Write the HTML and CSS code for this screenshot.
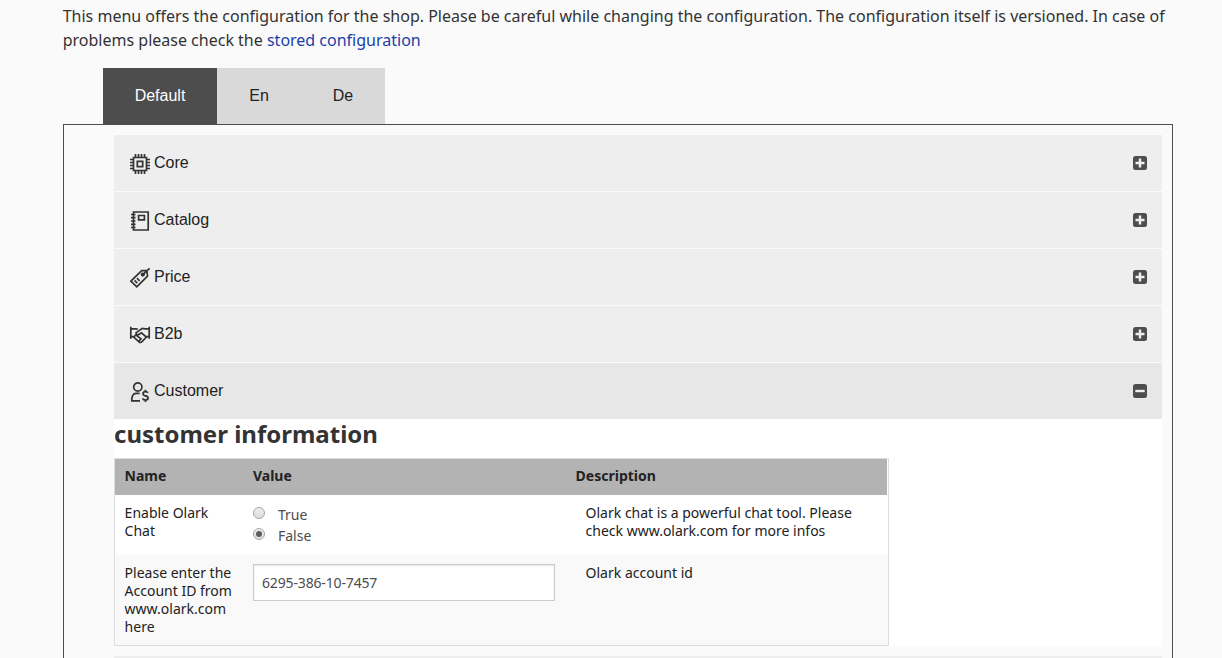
FILE: index.html
```html
<!DOCTYPE html>
<html lang="en">
<head>
<meta charset="utf-8">
<title>Configuration</title>
<link rel="stylesheet" href="styles.css">
</head>
<body>
<main class="page">
  <p class="intro"><span class="line">This menu offers the configuration for the shop. Please be careful while changing the configuration. The configuration itself is versioned. In case of</span> <span class="line">problems please check the <a class="link" href="#">stored configuration</a></span></p>
  <nav class="tabs">
    <a class="tab tab-active">Default</a>
    <a class="tab">En</a>
    <a class="tab">De</a>
  </nav>
  <section class="panel">
    <div class="item">
      <svg class="icon" viewBox="0 0 20 20"><path d="M3.5 3.5h13v13h-13zM7.3 7.3h5.4v5.4H7.3zM5.5 0v3.5M8.5 0v3.5M11.5 0v3.5M14.5 0v3.5M5.5 16.5V20M8.5 16.5V20M11.5 16.5V20M14.5 16.5V20M0 5.5h3.5M0 8.5h3.5M0 11.5h3.5M0 14.5h3.5M16.5 5.5H20M16.5 8.5H20M16.5 11.5H20M16.5 14.5H20"/></svg>
      <span class="label">Core</span>
      <svg class="toggle" viewBox="0 0 14 14"><rect width="14" height="14" rx="2.5"/><path d="M7 2.5v9M2.5 7h9"/></svg>
    </div>
    <div class="item">
      <svg class="icon" viewBox="0 0 20 20"><path d="M3.5 1h14.7v18H3.5zM8.6 4.5h5.8v4.4H8.6zM1 3.5h4.5M1 6.7h4.5M1 10h4.5M1 13.3h4.5M1 16.5h4.5"/></svg>
      <span class="label">Catalog</span>
      <svg class="toggle" viewBox="0 0 14 14"><rect width="14" height="14" rx="2.5"/><path d="M7 2.5v9M2.5 7h9"/></svg>
    </div>
    <div class="item">
      <svg class="icon" viewBox="0 0 20 20"><path d="M.9 13.2 11.7 2.6l5.2-.2.6 5.8L6.8 18.9zM19.6.4l-7 6.4M4.6 12.3l2.6 2.8M7 10.2l2.6 2.8"/><circle class="solid" cx="12.8" cy="6.6" r="1.3"/></svg>
      <span class="label">Price</span>
      <svg class="toggle" viewBox="0 0 14 14"><rect width="14" height="14" rx="2.5"/><path d="M7 2.5v9M2.5 7h9"/></svg>
    </div>
    <div class="item">
      <svg class="icon" viewBox="0 0 20 20"><path d="M.8 1.8v12M19.2 1.8v12M.8 3.8h4l3 .4M.8 11.7h3M16.4 11.7h2.8M19.2 3.8h-4l-3-.4L6 7.8c.2 2 1.8 2.4 3.2 1.4l2.2-1.4 5 4.2-4.8 5-1.8.6-6-5.4 2-2.4 5.2 4-2.2 2.4"/></svg>
      <span class="label">B2b</span>
      <svg class="toggle" viewBox="0 0 14 14"><rect width="14" height="14" rx="2.5"/><path d="M7 2.5v9M2.5 7h9"/></svg>
    </div>
    <div class="item item-open">
      <svg class="icon" viewBox="0 0 20 20"><circle cx="7.8" cy="5" r="4.1"/><path d="M10 18.9H1.8c-.2-4.8 1.4-7.6 4.2-7.6h3.6M18 10.8c-.5-.8-1.3-1.2-2.5-1.2-3.3 0-3.2 3.8-.1 4.2 3.8.5 3.3 4.2.1 4.2-1.4 0-2.4-.5-3-1.5M15.4 7.7v1.9M15.4 18v2"/></svg>
      <span class="label">Customer</span>
      <svg class="toggle" viewBox="0 0 14 14"><rect width="14" height="14" rx="2.5"/><path d="M2.3 7h9.4"/></svg>
    </div>
    <div class="content">
      <h2 class="title">customer information</h2>
      <div class="table">
        <div class="row head"><div>Name</div><div>Value</div><div>Description</div></div>
        <div class="row">
          <div>Enable Olark<br>Chat</div>
          <div class="choices">
            <label class="choice"><i class="radio"></i>True</label>
            <label class="choice"><i class="radio radio-on"></i>False</label>
          </div>
          <div class="desc">Olark chat is a powerful chat tool. Please<br>check www.olark.com for more infos</div>
        </div>
        <div class="row row-alt">
          <div>Please enter the<br>Account ID from<br>www.olark.com<br>here</div>
          <div><input class="field" type="text" value="6295-386-10-7457"></div>
          <div class="desc">Olark account id</div>
        </div>
      </div>
    </div>
    <div class="item item-next"></div>
  </section>
</main>
</body>
</html>
```
FILE: styles.css
```css
* { box-sizing: border-box; }
body {
  margin: 0;
  background: #fafafa;
  color: #222;
  font-family: "Noto Sans", sans-serif;
}
.page { width: 1110px; margin-left: 63px; padding-top: 4px; }
.intro { margin: 0 0 0 -.3px; font-size: 16px; line-height: 24px; color: #333; white-space: nowrap; }
.line { display: block; }
.link { color: #1a3fa8; text-decoration: none; }
.tabs {
  display: flex;
  width: 282px;
  height: 56px;
  margin: 16px 0 0 40px;
  background: #d9d9d9;
  font: 16px/56px "Liberation Sans", Arial, sans-serif;
}
.tab { width: 84px; text-align: center; }
.tab-active { width: 114px; background: #4d4d4d; color: #fff; }
.panel { height: 534px; padding: 10px 10px 0 50px; border: 1px solid #4d4d4d; border-bottom: 0; }
.item {
  display: flex;
  align-items: center;
  height: 56px;
  margin-bottom: 1px;
  padding: 0 15px 0 16px;
  background: #eee;
}
.item-open { margin-bottom: 0; background: #e7e7e7; }
.item-next { height: 2px; margin: 10px 0 0; }
.icon {
  width: 20px;
  height: 20px;
  margin: 2px 4px 0 0;
  overflow: visible;
  fill: none;
  stroke: #333;
  stroke-width: 1.7;
}
.solid { fill: #333; }
.label { flex: 1; font: 16px/56px "Liberation Sans", Arial, sans-serif; height: 56px; }
.toggle { width: 14px; height: 14px; fill: #4d4d4d; stroke: #eee; stroke-width: 2.4; }
.toggle rect { stroke: none; }
.content { height: 227px; background: #fff; }
.title { margin: 0; height: 39px; font-size: 24px; line-height: 29px; color: #333; }
.table { width: 775px; height: 188px; border: 1px solid #ddd; font-size: 14px; line-height: 18px; }
.row {
  display: grid;
  grid-template-columns: 128.4px 322.6px 1fr;
  height: 60px;
  padding: 9px 10px 0 9.6px;
}
.head { width: 772px; height: 36px; padding-top: 8px; background: #b3b3b3; font-weight: 700; }
.row-alt { height: 90px; background: #f9f9f9; }
.desc { padding-left: 10px; }
.choice { display: flex; height: 21px; line-height: 21px; color: #4d4d4d; }
.radio {
  display: grid;
  place-items: center;
  width: 12px;
  height: 12px;
  margin: 3px 13px 0 0;
  border: 1px solid #a5a5a5;
  border-radius: 50%;
  background: linear-gradient(#eee, #dedede);
}
.radio-on::after { content: ""; width: 6px; height: 6px; border-radius: 50%; background: #5d5d5d; }
.field {
  display: block;
  width: 302px;
  height: 37px;
  padding: 0 8px;
  border: 1px solid #ccc;
  background: #fff;
  box-shadow: inset 0 1px 2px rgba(0, 0, 0, .1);
  color: #4d4d4d;
  font: 14px "Noto Sans", sans-serif;
  letter-spacing: -.15px;
}
```
